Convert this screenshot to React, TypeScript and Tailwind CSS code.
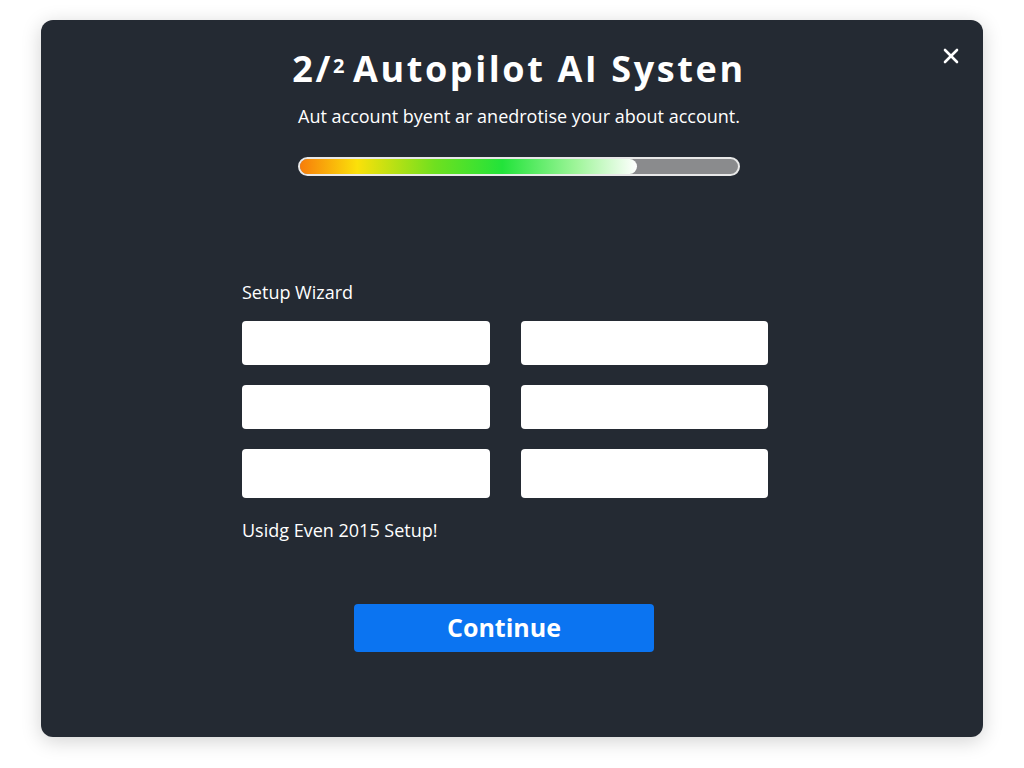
import { X } from "lucide-react";

const FIELDS = [0, 1, 2];

export default function App() {
  return (
    <div className="min-h-screen w-full bg-white pl-[41px] pt-[20px]" style={{ fontFamily: "'Open Sans', sans-serif" }}>
      <div className="relative flex h-[717px] w-[942px] flex-col rounded-[12px] bg-[#242a33] shadow-[0_4px_20px_rgba(0,0,0,0.18)]">
        <button
          type="button"
          aria-label="Close"
          className="absolute right-[20px] top-[24px] flex h-[24px] w-[24px] items-center justify-center text-white"
        >
          <X className="h-[24px] w-[24px]" strokeWidth={2.6} />
        </button>

        <div className="flex flex-col items-center pl-[14px] pt-[25px]">
          <h1 className="flex items-baseline text-[36px] font-bold leading-[47px] tracking-[2.6px] text-white">
            <span>2/</span>
            <span className="relative top-[-9px] mr-[6px] text-[20px]">2</span>
            <span>Autopilot AI Systen</span>
          </h1>
          <p className="mt-[6px] text-[18px] leading-[24px] text-white">
            Aut account byent ar anedrotise your about account.
          </p>
          <div className="mt-[29px] flex h-[19px] w-[442px] overflow-hidden rounded-full border-2 border-[#e8e8e8] bg-[#8a8b8d]">
            <div className="h-full w-[77%] rounded-r-full bg-[linear-gradient(90deg,#f77d0b_0%,#fbe10a_17%,#6fe01f_40%,#22e33a_60%,#9ff59a_82%,#ffffff_100%)]" />
          </div>
        </div>

        <div className="mt-[104px] flex w-[727px] flex-col pl-[201px]">
          <div className="text-[18px] leading-[24px] text-white">Setup Wizard</div>
          <div className="mt-[17px] grid grid-cols-2 gap-x-[31px] gap-y-[20px]">
            {FIELDS.map((i) => (
              <div key={i} className="contents">
                <input
                  className={`w-full rounded-[4px] bg-white outline-none ${i === 2 ? "h-[49px]" : "h-[44px]"}`}
                />
                <input
                  className={`w-full rounded-[4px] bg-white outline-none ${i === 2 ? "h-[49px]" : "h-[44px]"}`}
                />
              </div>
            ))}
          </div>
          <div className="mt-[20px] text-[18px] leading-[24px] text-white">Usidg Even 2015 Setup!</div>
        </div>

        <div className="mt-[62px] flex pl-[313px]">
          <button
            type="button"
            className="h-[48px] w-[300px] rounded-[4px] bg-[#0b74f1] text-[25px] font-bold text-white"
          >
            Continue
          </button>
        </div>
      </div>
    </div>
  );
}
